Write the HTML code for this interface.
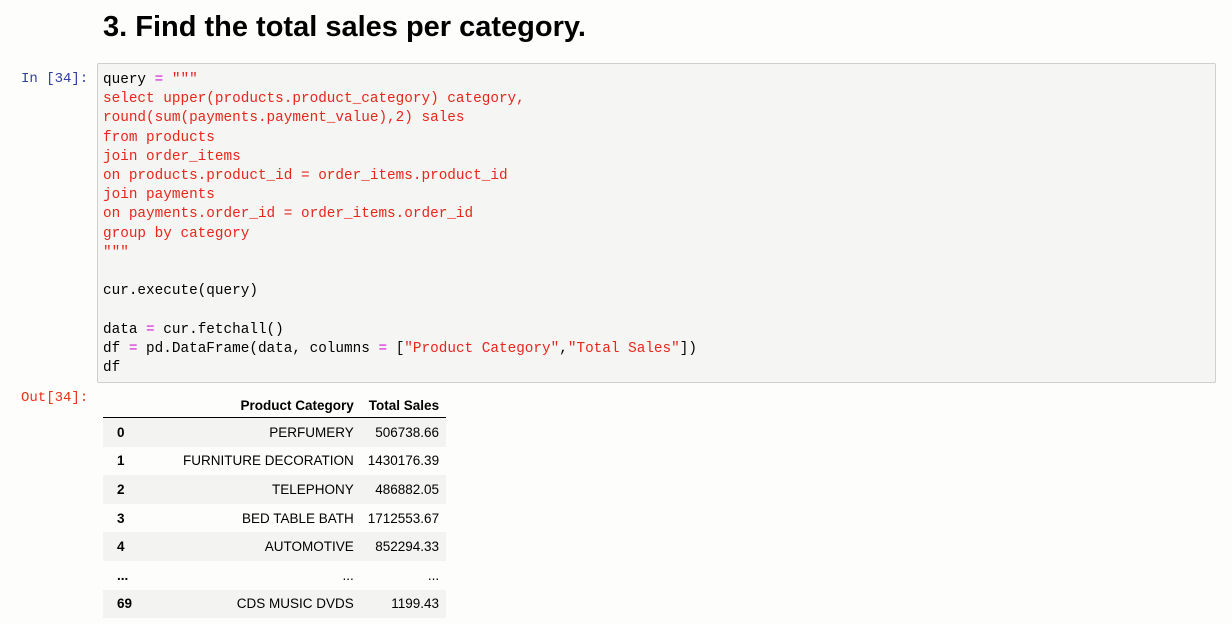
<!DOCTYPE html>
<html><head><style>
body{margin:0;background:#fdfdfb;width:1232px;height:624px;overflow:hidden;position:relative;font-family:"Liberation Sans",sans-serif}
h1{position:absolute;left:103px;top:9px;margin:0;font-size:29px;font-weight:bold;color:#000;line-height:36px}
.prompt{position:absolute;font-family:"Liberation Mono",monospace;font-size:14px;line-height:19px}
.code{position:absolute;left:97px;top:63px;width:1117px;height:318px;background:#f5f5f3;border:1px solid #cfcfcf;border-radius:2px}
pre{margin:0;position:absolute;left:5px;top:7px;font-family:"Liberation Mono",monospace;font-size:14.35px;line-height:19.2px;color:#e8261c}
.k{color:#000}.o{color:#d41ad4}
table{position:absolute;left:103px;top:393px;border-collapse:collapse;font-size:13.5px;color:#000}
th,td{height:28.6px;padding:0 7px;text-align:right;white-space:nowrap}
thead th{height:24px;border-bottom:1px solid #000;vertical-align:middle}
tbody th{text-align:left;padding-left:14px;width:52px}
tbody tr:nth-child(odd){background:#f3f3f1}
</style></head><body>
<h1>3. Find the total sales per category.</h1>
<div class="prompt" style="left:21px;top:70px;color:#303f9f">In [34]:</div>
<div class="code"><pre><span class="k">query</span> <span class="o">=</span> """
select upper(products.product_category) category,
round(sum(payments.payment_value),2) sales
from products
join order_items
on products.product_id = order_items.product_id
join payments
on payments.order_id = order_items.order_id
group by category
"""

<span class="k">cur.execute(query)</span>

<span class="k">data</span> <span class="o">=</span> <span class="k">cur.fetchall()</span>
<span class="k">df</span> <span class="o">=</span> <span class="k">pd.DataFrame(data, columns</span> <span class="o">=</span> <span class="k">[</span>"Product Category"<span class="k">,</span>"Total Sales"<span class="k">])</span>
<span class="k">df</span></pre></div>
<div class="prompt" style="left:21px;top:389px;color:#e8331c">Out[34]:</div>
<table>
<thead><tr><th style="width:52px"></th><th>Product Category</th><th>Total Sales</th></tr></thead>
<tbody>
<tr><th>0</th><td>PERFUMERY</td><td>506738.66</td></tr>
<tr><th>1</th><td>FURNITURE DECORATION</td><td>1430176.39</td></tr>
<tr><th>2</th><td>TELEPHONY</td><td>486882.05</td></tr>
<tr><th>3</th><td>BED TABLE BATH</td><td>1712553.67</td></tr>
<tr><th>4</th><td>AUTOMOTIVE</td><td>852294.33</td></tr>
<tr style="background:none"><th>...</th><td>...</td><td>...</td></tr>
<tr><th>69</th><td>CDS MUSIC DVDS</td><td>1199.43</td></tr>
</tbody></table>
</body></html>
